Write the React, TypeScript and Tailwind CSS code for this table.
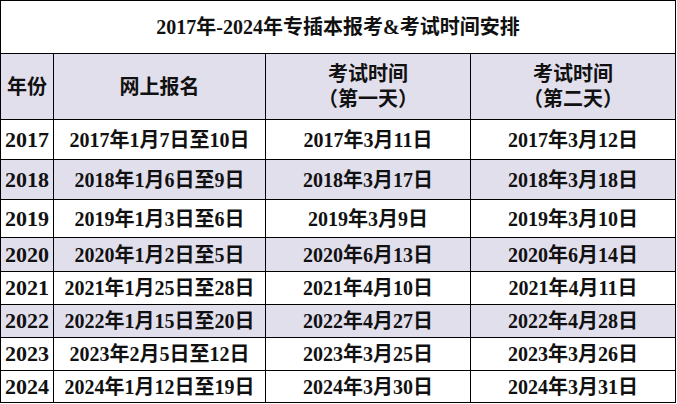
const rows = [
  { year: "2017", signup: "2017年1月7日至10日", day1: "2017年3月11日", day2: "2017年3月12日", h: "h-[40px]", shade: false },
  { year: "2018", signup: "2018年1月6日至9日", day1: "2018年3月17日", day2: "2018年3月18日", h: "h-[40px]", shade: true },
  { year: "2019", signup: "2019年1月3日至6日", day1: "2019年3月9日", day2: "2019年3月10日", h: "h-[38px]", shade: false },
  { year: "2020", signup: "2020年1月2日至5日", day1: "2020年6月13日", day2: "2020年6月14日", h: "h-[34px]", shade: true },
  { year: "2021", signup: "2021年1月25日至28日", day1: "2021年4月10日", day2: "2021年4月11日", h: "h-[33px]", shade: false },
  { year: "2022", signup: "2022年1月15日至20日", day1: "2022年4月27日", day2: "2022年4月28日", h: "h-[33px]", shade: true },
  { year: "2023", signup: "2023年2月5日至12日", day1: "2023年3月25日", day2: "2023年3月26日", h: "h-[33px]", shade: false },
  { year: "2024", signup: "2024年1月12日至19日", day1: "2024年3月30日", day2: "2024年3月31日", h: "h-[32px]", shade: false },
];

export default function App() {
  return (
    <div className="h-[404px] w-[677px] bg-white font-['Liberation_Serif','Noto_Sans_CJK_SC',serif] text-[20px] font-bold text-[#111]">
      <table className="w-[676px] table-fixed border-collapse border border-black text-center">
        <colgroup>
          <col className="w-[53px]" />
          <col className="w-[212px]" />
          <col className="w-[205px]" />
          <col />
        </colgroup>
        <tbody>
          <tr className="h-[53px]">
            <td colSpan={4} className="border border-black leading-none">
              2017年-2024年专插本报考&amp;考试时间安排
            </td>
          </tr>
          <tr className="h-[66px] bg-[#e2dfed]">
            <td className="border border-black px-0 leading-none">年份</td>
            <td className="border border-black leading-none">网上报名</td>
            <td className="border border-black leading-[25px]">
              考试时间
              <br />
              （第一天）
            </td>
            <td className="border border-black leading-[25px]">
              考试时间
              <br />
              （第二天）
            </td>
          </tr>
          {rows.map((r) => (
            <tr key={r.year} className={`${r.h} ${r.shade ? "bg-[#e2dfed]" : ""}`}>
              <td className="border border-black px-0 text-[22px] leading-none">{r.year}</td>
              <td className="border border-black leading-none">{r.signup}</td>
              <td className="border border-black leading-none">{r.day1}</td>
              <td className="border border-black leading-none">{r.day2}</td>
            </tr>
          ))}
        </tbody>
      </table>
    </div>
  );
}
